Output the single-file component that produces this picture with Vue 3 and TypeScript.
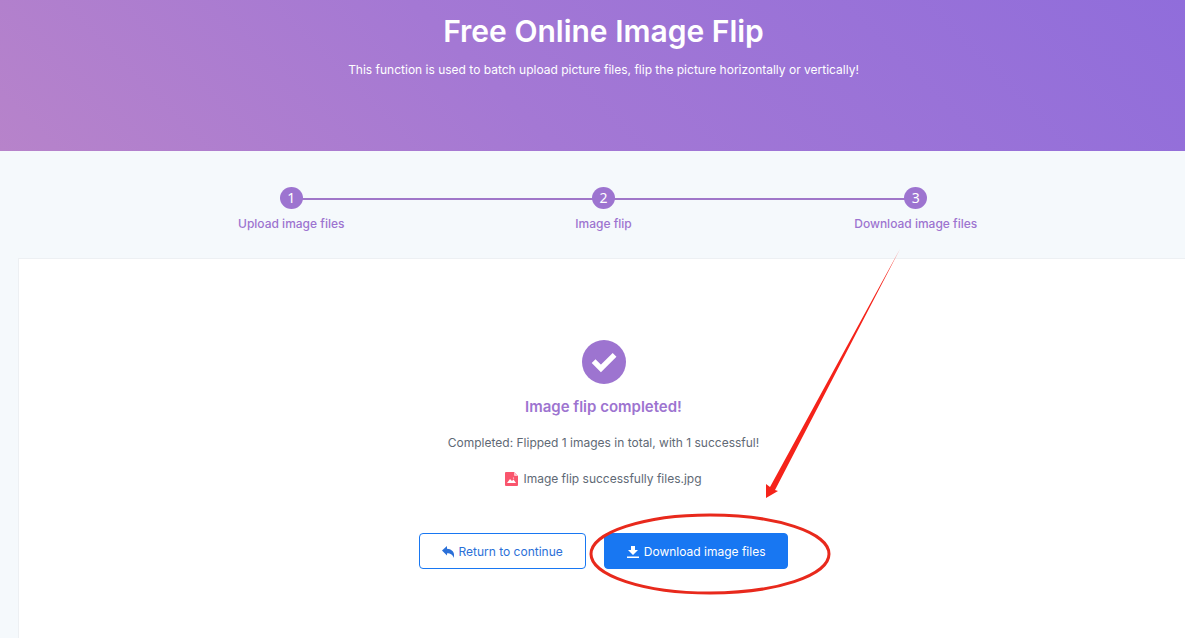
<script setup lang="ts">
interface Step {
  id: number
  label: string
}

const steps: Step[] = [
  { id: 1, label: 'Upload image files' },
  { id: 2, label: 'Image flip' },
  { id: 3, label: 'Download image files' },
]

const total = 1
const successful = 1
const fileName = 'Image flip successfully files.jpg'
</script>

<template>
  <div class="page">
    <header class="hero">
      <h1>Free Online Image Flip</h1>
      <p>This function is used to batch upload picture files, flip the picture horizontally or vertically!</p>
    </header>

    <main>
      <ol class="steps">
        <li v-for="step in steps" :key="step.id" class="step">
          <span class="step-number">{{ step.id }}</span>
          <span class="step-label">{{ step.label }}</span>
        </li>
      </ol>

      <section class="panel">
        <svg class="check" viewBox="0 0 512 512" aria-hidden="true">
          <circle cx="256" cy="256" r="256" fill="currentColor" />
          <path d="M135 246 220 331 379 172" fill="none" stroke="#fff" stroke-width="62" />
        </svg>
        <h2>Image flip completed!</h2>
        <p>Completed: Flipped {{ total }} images in total, with {{ successful }} successful!</p>
        <p class="file">
          <svg class="file-icon" viewBox="0 0 13 14" aria-hidden="true">
            <path fill="#f9556d" d="M1 0h8l4 4v9a1 1 0 0 1-1 1H1a1 1 0 0 1-1-1V1a1 1 0 0 1 1-1z" />
            <path fill="#ffc2cb" d="M9 0l4 4H10a1 1 0 0 1-1-1z" />
            <path fill="#fff" d="M2 11l3-4 2 2 1.500-1.500L11 11z" />
            <circle cx="8.500" cy="6" r=".6" fill="#fff" />
          </svg>
          <span>{{ fileName }}</span>
        </p>

        <div class="actions">
          <button type="button" class="btn outline">
            <svg viewBox="0 0 12 12" aria-hidden="true">
              <path fill="currentColor" d="M0 4.500 5 0v2.700C9.500 3 12 5.500 12 8.500V12C10.500 8.800 9 7.500 5 7.300V9.500z" />
            </svg>
            Return to continue
          </button>
          <div class="download">
            <button type="button" class="btn solid">
              <svg viewBox="0 0 12 12" aria-hidden="true">
                <path fill="currentColor" d="M4 0h4v4h3L6 9 1 4h3zM0 10.500h12V12H0z" />
              </svg>
              Download image files
            </button>
            <svg class="callout" viewBox="0 0 320 350" aria-hidden="true">
              <ellipse cx="122" cy="307" rx="119" ry="39" fill="none" stroke="#e8291c" stroke-width="3" />
              <path fill="#f5231a" d="M312 2 187 243l3 1-12 7V237l4 3z" />
            </svg>
          </div>
        </div>
      </section>
    </main>
  </div>
</template>

<style>
body {
  margin: 0;
  background: #f5f9fc;
}
</style>

<style scoped>
.page {
  display: flex;
  flex-direction: column;
  min-height: 100vh;
  overflow: hidden;
  color: #606975;
  font: 12px/20px Inter, "Liberation Sans", sans-serif;
}

h1,
h2,
p,
ol {
  margin: 0;
}

.hero {
  padding: 10px 0 71px 22px;
  color: #fff;
  text-align: center;
  background: linear-gradient(45deg, #b783ca 0%, #a478d4 42%, #906ddb 100%);
}

.hero h1 {
  margin-bottom: 8px;
  font-size: 30px;
  line-height: 42px;
  font-weight: 600;
}

main {
  display: flex;
  flex: 1;
  flex-direction: column;
  margin: 0 -4px 0 18px;
}

.steps {
  display: flex;
  width: 80%;
  margin: 36px auto 24px;
  padding: 0;
  list-style: none;
  color: #9d74d0;
}

.step {
  position: relative;
  display: flex;
  flex: 1;
  flex-direction: column;
  align-items: center;
  gap: 5px;
}

.step + .step::before {
  content: "";
  position: absolute;
  top: 11px;
  right: 50%;
  width: 100%;
  height: 2px;
  background: #a077c9;
}

.step-number {
  z-index: 1;
  width: 23px;
  height: 22px;
  border-radius: 50%;
  background: #9d74d0;
  color: #fff;
  font: 14px/22px "Noto Sans", sans-serif;
  text-align: center;
}

.step-label {
  font-weight: 500;
}

.panel {
  display: flex;
  flex: 1;
  flex-direction: column;
  align-items: center;
  padding: 81px 0 24px;
  border: 1px solid #edf0f3;
  border-bottom: 0;
  background: #fff;
}

.check {
  width: 44px;
  height: 44px;
  color: #9d74d0;
}

.panel h2 {
  margin: 11px 0 14px;
  color: #9d74d0;
  font-size: 15px;
  line-height: 24px;
  font-weight: 600;
}

.file {
  display: flex;
  align-items: center;
  gap: 5px;
  margin: 16px 0 44px;
}

.file-icon {
  width: 13px;
  height: 14px;
}

.actions {
  display: flex;
  gap: 18px;
}

.download {
  position: relative;
}

.btn {
  display: flex;
  align-items: center;
  justify-content: center;
  gap: 5px;
  padding: 8px 22px 6px;
  border: 1px solid #1877f2;
  border-radius: 4px;
  font: inherit;
  cursor: pointer;
}

.btn svg {
  width: 12px;
  height: 12px;
}

.outline {
  background: #fff;
  color: #2b70d8;
}

.solid {
  background: #1877f2;
  color: #fff;
}

.callout {
  position: absolute;
  top: -286px;
  left: -16px;
  width: 320px;
  height: 350px;
  pointer-events: none;
}
</style>
